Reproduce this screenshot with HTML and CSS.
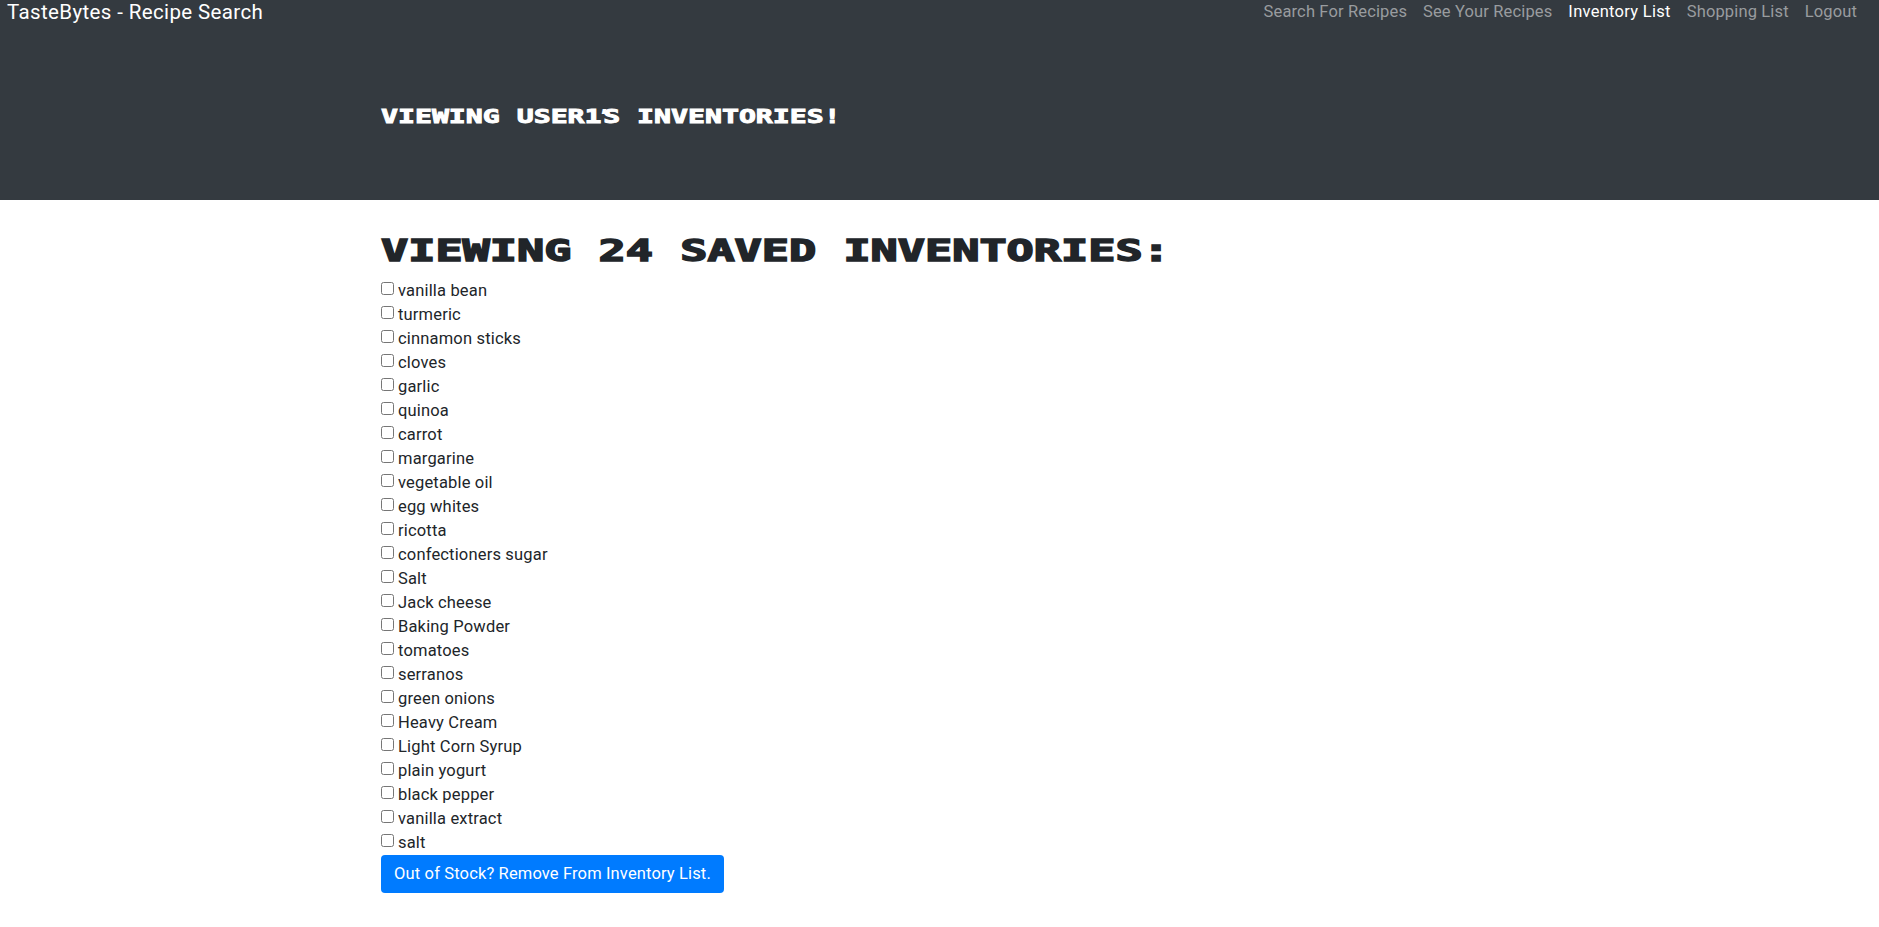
FILE: index.html
```html
<!DOCTYPE html>
<html lang="en">
<head>
<meta charset="utf-8">
<title>TasteBytes - Recipe Search</title>
<link rel="stylesheet" href="styles.css">
</head>
<body>
<nav class="navbar">
  <a class="brand">TasteBytes - Recipe Search</a>
  <div class="links">
    <a>Search For Recipes</a><a>See Your Recipes</a><a class="active">Inventory List</a><a>Shopping List</a><a>Logout</a>
  </div>
</nav>
<header class="hero"><h2 class="display small">VIEWING USER1<span class="apos">'</span>S INVENTORIES!</h2></header>
<main class="content">
  <h1 class="display large">VIEWING 24 SAVED INVENTORIES:</h1>
  <form class="inventory">
    <label class="item"><input type="checkbox"><span>vanilla bean</span></label>
    <label class="item"><input type="checkbox"><span>turmeric</span></label>
    <label class="item"><input type="checkbox"><span>cinnamon sticks</span></label>
    <label class="item"><input type="checkbox"><span>cloves</span></label>
    <label class="item"><input type="checkbox"><span>garlic</span></label>
    <label class="item"><input type="checkbox"><span>quinoa</span></label>
    <label class="item"><input type="checkbox"><span>carrot</span></label>
    <label class="item"><input type="checkbox"><span>margarine</span></label>
    <label class="item"><input type="checkbox"><span>vegetable oil</span></label>
    <label class="item"><input type="checkbox"><span>egg whites</span></label>
    <label class="item"><input type="checkbox"><span>ricotta</span></label>
    <label class="item"><input type="checkbox"><span>confectioners sugar</span></label>
    <label class="item"><input type="checkbox"><span>Salt</span></label>
    <label class="item"><input type="checkbox"><span>Jack cheese</span></label>
    <label class="item"><input type="checkbox"><span>Baking Powder</span></label>
    <label class="item"><input type="checkbox"><span>tomatoes</span></label>
    <label class="item"><input type="checkbox"><span>serranos</span></label>
    <label class="item"><input type="checkbox"><span>green onions</span></label>
    <label class="item"><input type="checkbox"><span>Heavy Cream</span></label>
    <label class="item"><input type="checkbox"><span>Light Corn Syrup</span></label>
    <label class="item"><input type="checkbox"><span>plain yogurt</span></label>
    <label class="item"><input type="checkbox"><span>black pepper</span></label>
    <label class="item"><input type="checkbox"><span>vanilla extract</span></label>
    <label class="item"><input type="checkbox"><span>salt</span></label>
    <button class="remove" type="button">Out of Stock? Remove From Inventory List.</button>
  </form>
</main>
</body>
</html>
```
FILE: styles.css
```css
* { box-sizing: border-box; }
body {
  margin: 0;
  background: #fff;
  color: #212529;
  font-family: Roboto, "Liberation Sans", sans-serif;
  font-size: 16px;
  line-height: 24px;
}
.navbar {
  display: flex;
  justify-content: space-between;
  height: 40px;
  padding: 0 22px 0 7px;
  background: #343a40;
}
.brand { color: #fff; font-size: 20.5px; letter-spacing: .37px; }
.links { display: flex; gap: 16px; color: #999c9f; font-size: 16.5px; letter-spacing: .14px; }
.links .active { color: #fff; letter-spacing: .28px; }
.hero { height: 160px; padding: 61px 0 0 381px; background: #343a40; }
.content { padding: 31px 0 0 381px; }
.display {
  width: max-content;
  margin: 0;
  font-family: "DejaVu Sans Mono", monospace;
  font-weight: 700;
  white-space: nowrap;
  transform-origin: left top;
}
.small {
  color: #fff;
  font-size: 19.5px;
  line-height: 30px;
  transform: scaleX(1.445);
  -webkit-text-stroke: .9px currentColor;
}
.large {
  font-size: 30px;
  line-height: 40px;
  transform: scaleX(1.506);
  -webkit-text-stroke: 1.5px currentColor;
}
.apos {
  margin: 0 -.09em;
  font-family: "Liberation Sans", sans-serif;
  font-style: italic;
  -webkit-text-stroke: 0;
}
.inventory { display: flex; flex-direction: column; align-items: flex-start; padding-top: 8px; }
.item { display: flex; height: 24px; font-size: 16.5px; letter-spacing: .17px; }
.item input { width: 13px; height: 13px; margin: 3px 4px 0 0; }
.remove {
  width: 343px;
  height: 38px;
  padding: 0;
  border: 0;
  border-radius: 4px;
  background: #007bff;
  color: #fff;
  font: 16.5px/24px Roboto, "Liberation Sans", sans-serif;
  letter-spacing: .14px;
  white-space: nowrap;
}
```
